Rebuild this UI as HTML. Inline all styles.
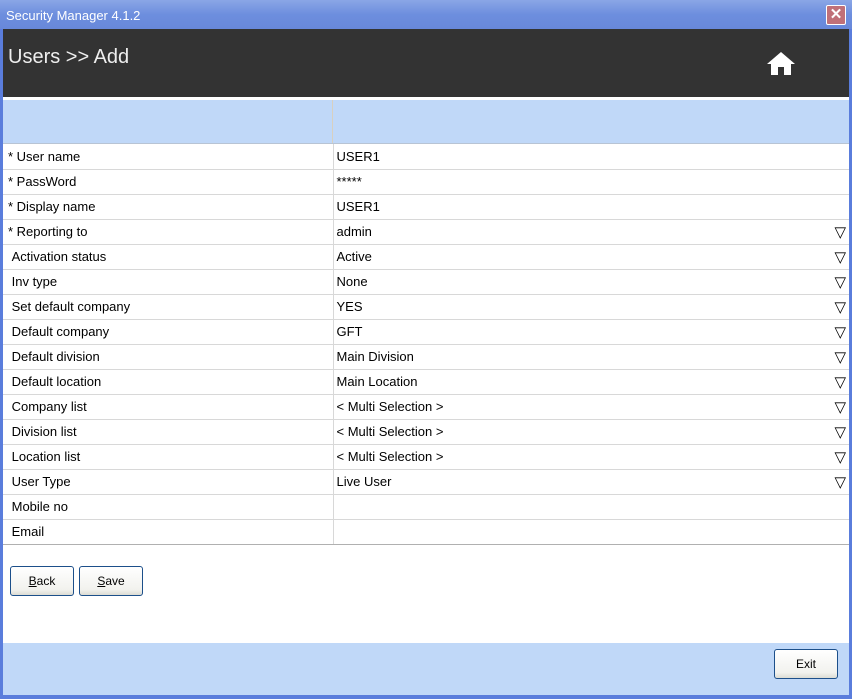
<!DOCTYPE html>
<html><head><style>
*{margin:0;padding:0;box-sizing:border-box}
body{width:852px;height:699px;overflow:hidden;background:#0a246a;font-family:"Liberation Sans",sans-serif;position:relative}
.win{position:absolute;left:0;top:0;width:852px;height:699px;background:#5a7ddc}
.title{position:absolute;left:0;top:0;width:852px;height:29px;background:linear-gradient(#8aa6e6,#6d8ede 50%,#6888da);color:#fff;font-size:13px;line-height:31px;padding-left:6px}
.close{position:absolute;left:826px;top:5px;width:20px;height:20px;background:#c07078;border:1px solid #fff;border-radius:2px;color:#fff;font-size:15px;line-height:18px;text-align:center;font-weight:bold}
.client{position:absolute;left:3px;top:29px;width:846px;height:666px;background:#fff}
.hdr{position:absolute;left:0;top:0;width:846px;height:68px;background:#333;color:#eee;font-size:20px;padding:17px 0 0 5px}
.home{position:absolute;left:763px;top:22px}
.thead{position:absolute;left:0;top:71px;width:846px;height:44px;background:#c0d8f8;border-bottom:1px solid #b8c4d4}
.thead div{position:absolute;left:329px;top:0;width:1px;height:43px;background:#d8d0c0}
table{position:absolute;left:0;top:115px;width:846px;border-collapse:collapse;font-size:13px;color:#000}
td{height:25px;border-bottom:1px solid #d8d8d8;padding:0 0 0 5px;position:relative}
td:first-child{width:330px;border-right:1px solid #d8d8d8}
td:last-child{padding-left:3px}
tr:last-child td{border-bottom:1px solid #b0b0b0}
.ar{position:absolute;right:3px;top:3px;font-size:15px}
.btn{position:absolute;height:30px;border:1px solid #1c4f8a;border-radius:3px;background:linear-gradient(#fff,#f2f2ee 80%,#dcdcd4);font-size:12px;text-align:center;line-height:28px}
.foot{position:absolute;left:0;top:614px;width:846px;height:52px;background:#c0d8f8}
</style></head><body>
<div class="win">
<div class="title">Security Manager 4.1.2</div>
<div class="close">✕</div>
<div class="client">
<div class="hdr">Users &gt;&gt; Add</div>
<svg class="home" width="30" height="26" viewBox="0 0 30 26"><path d="M15 1 L1 13 H5 V24 H12 V16 H18 V24 H25 V13 H29 Z" fill="#fff"/></svg>
<div class="thead"><div></div></div>
<table>
<tr><td>* User name</td><td>USER1</td></tr>
<tr><td>* PassWord</td><td>*****</td></tr>
<tr><td>* Display name</td><td>USER1</td></tr>
<tr><td>* Reporting to</td><td>admin<span class="ar">▽</span></td></tr>
<tr><td>&nbsp;Activation status</td><td>Active<span class="ar">▽</span></td></tr>
<tr><td>&nbsp;Inv type</td><td>None<span class="ar">▽</span></td></tr>
<tr><td>&nbsp;Set default company</td><td>YES<span class="ar">▽</span></td></tr>
<tr><td>&nbsp;Default company</td><td>GFT<span class="ar">▽</span></td></tr>
<tr><td>&nbsp;Default division</td><td>Main Division<span class="ar">▽</span></td></tr>
<tr><td>&nbsp;Default location</td><td>Main Location<span class="ar">▽</span></td></tr>
<tr><td>&nbsp;Company list</td><td>&lt; Multi Selection &gt;<span class="ar">▽</span></td></tr>
<tr><td>&nbsp;Division list</td><td>&lt; Multi Selection &gt;<span class="ar">▽</span></td></tr>
<tr><td>&nbsp;Location list</td><td>&lt; Multi Selection &gt;<span class="ar">▽</span></td></tr>
<tr><td>&nbsp;User Type</td><td>Live User<span class="ar">▽</span></td></tr>
<tr><td>&nbsp;Mobile no</td><td></td></tr>
<tr><td>&nbsp;Email</td><td></td></tr>
</table>
<div class="btn" style="left:7px;top:537px;width:64px"><u>B</u>ack</div>
<div class="btn" style="left:76px;top:537px;width:64px"><u>S</u>ave</div>
<div class="foot"></div>
<div class="btn" style="left:771px;top:620px;width:64px">Exit</div>
</div>
</div>
</body></html>
